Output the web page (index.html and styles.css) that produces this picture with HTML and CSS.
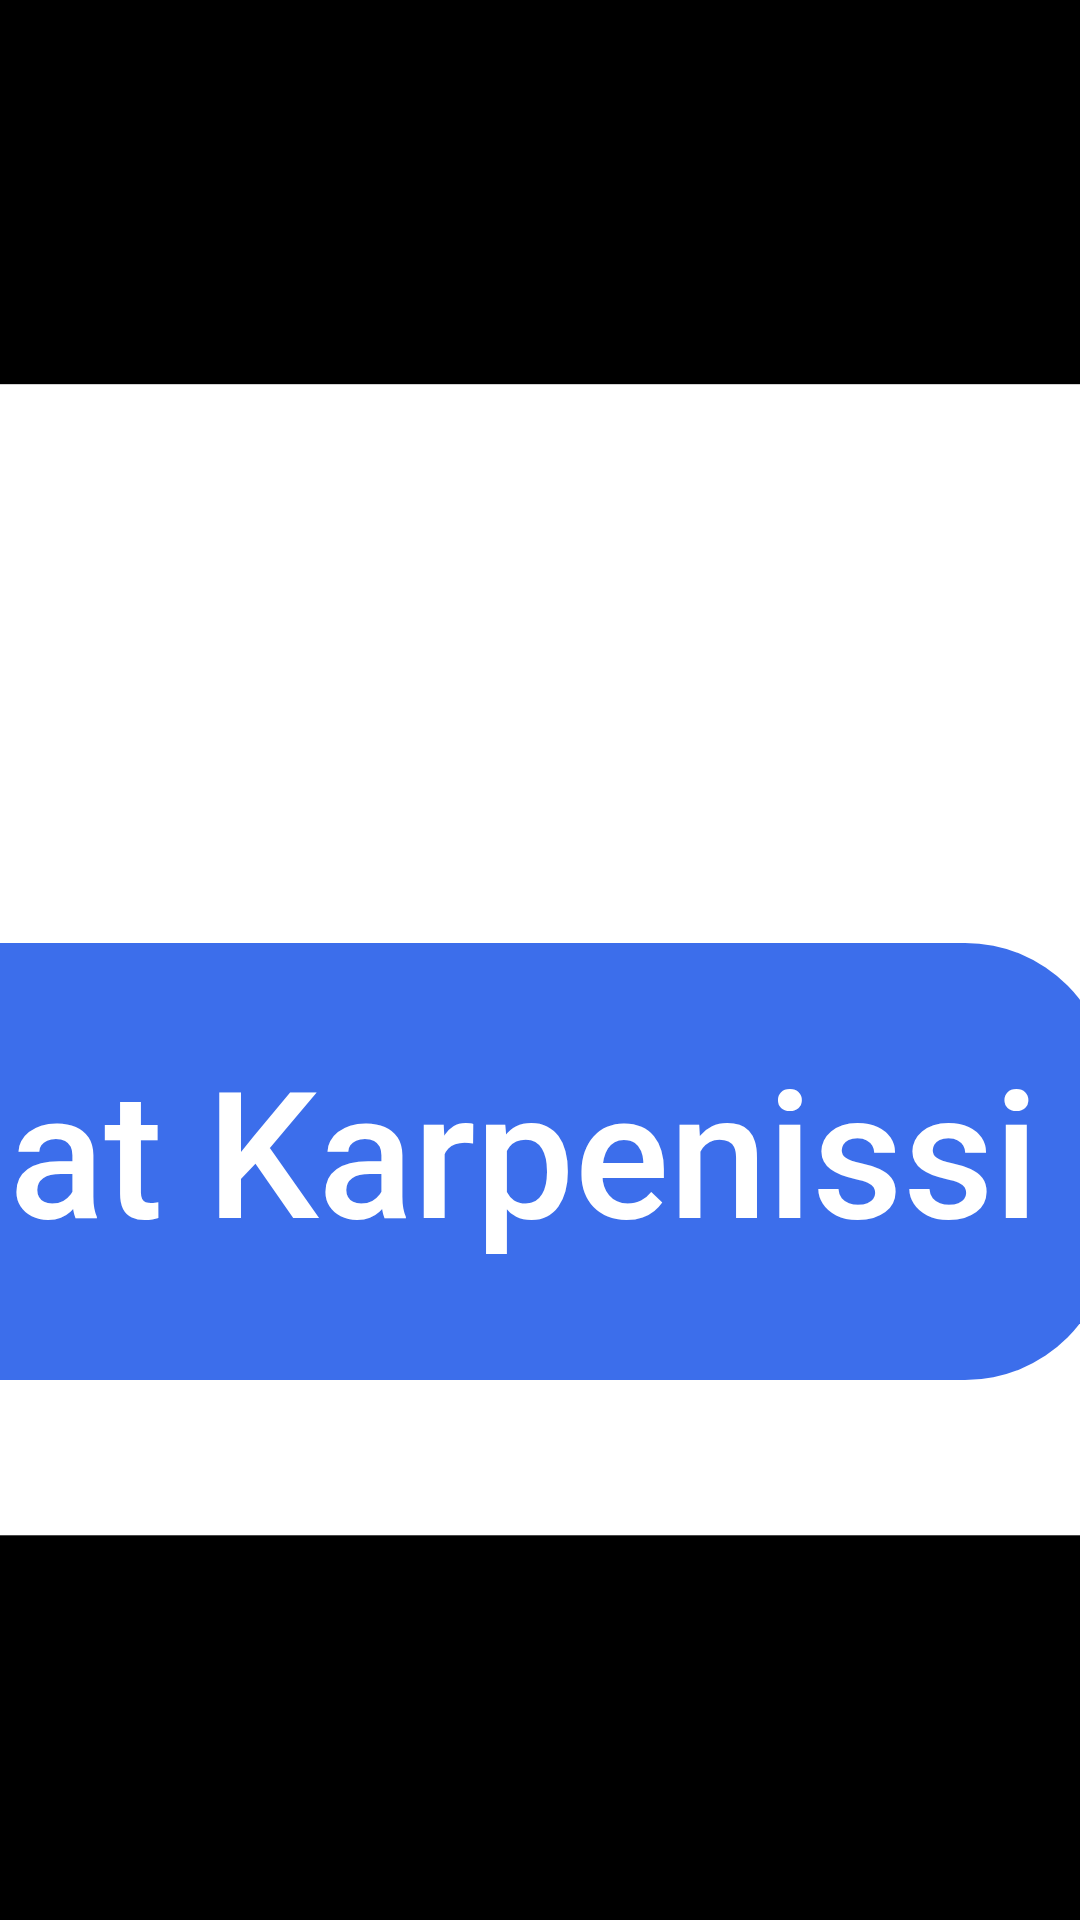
FILE: index.html
```html
<!DOCTYPE html>
<html lang="en">
<head>
<meta charset="utf-8">
<title>at Karpenissi</title>
<link rel="stylesheet" href="styles.css">
</head>
<body>
<div class="screen">
  <div class="band">
    <div class="pill"><span class="label">at Karpenissi</span></div>
  </div>
</div>
</body>
</html>
```
FILE: styles.css
```css
html, body {
  margin: 0;
  padding: 0;
  background: #000;
}
.screen {
  width: 1080px;
  height: 1920px;
  padding-top: 384px;
  box-sizing: border-box;
  background: #000;
}
.band {
  height: 1152px;
  background: #fff;
  overflow: hidden;
  padding-top: 558px;
  box-sizing: border-box;
  border-top: 1px solid #d2d2d2;
  border-bottom: 1px solid #4a4a4a;
}
.pill {
  margin-left: -300px;
  width: 1410px;
  box-sizing: border-box;
  padding: 126px 0 134px 309px;
  background: #3c6eeb;
  border-radius: 145px;
  display: flex;
  align-items: flex-start;
}
.label {
  font-family: Roboto, "Noto Sans", sans-serif;
  font-size: 177px;
  font-weight: 500;
  line-height: 177px;
  letter-spacing: -0.3px;
  color: #fff;
  white-space: nowrap;
}
```
